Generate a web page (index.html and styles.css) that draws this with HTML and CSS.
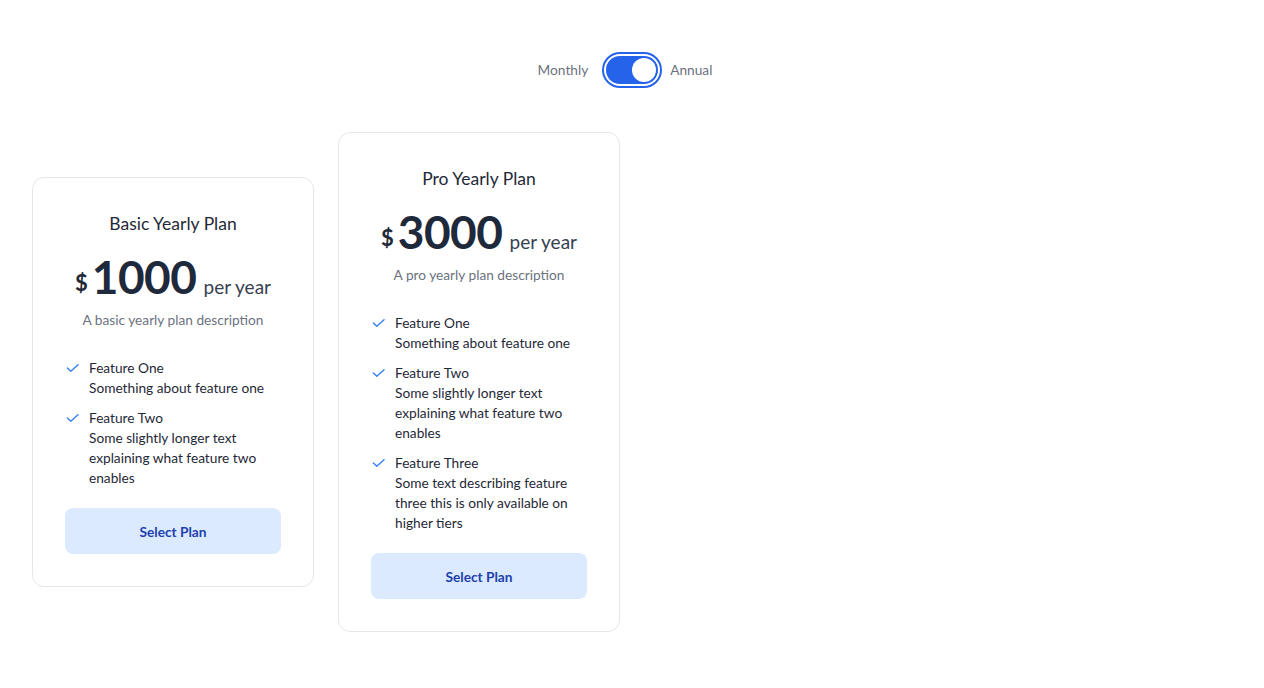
FILE: index.html
```html
<!DOCTYPE html>
<html lang="en">
<head>
<meta charset="utf-8">
<title>Pricing</title>
<link rel="stylesheet" href="styles.css">
</head>
<body>
<main class="page">
  <div class="billing">
    <span class="billing-label label-monthly">Monthly</span>
    <button class="toggle" type="button" aria-pressed="true"><span class="knob"></span></button>
    <span class="billing-label label-annual">Annual</span>
  </div>

  <div class="plans">
    <section class="card">
      <h2 class="card-title">Basic Yearly Plan</h2>
      <div class="price">
        <span class="currency">$</span><span class="amount">1000</span><span class="period">per year</span>
      </div>
      <p class="description">A basic yearly plan description</p>
      <ul class="features">
        <li class="feature">
          <svg class="check" viewBox="0 0 16 16" width="16" height="16"><path d="M2.4 8l3.4 3.2L13 4.8"/></svg>
          <div><div>Feature One</div><div>Something about feature one</div></div>
        </li>
        <li class="feature">
          <svg class="check" viewBox="0 0 16 16" width="16" height="16"><path d="M2.4 8l3.4 3.2L13 4.8"/></svg>
          <div><div>Feature Two</div><div>Some slightly longer text explaining what feature two enables</div></div>
        </li>
      </ul>
      <button class="select" type="button">Select Plan</button>
    </section>

    <section class="card">
      <h2 class="card-title">Pro Yearly Plan</h2>
      <div class="price">
        <span class="currency">$</span><span class="amount">3000</span><span class="period">per year</span>
      </div>
      <p class="description">A pro yearly plan description</p>
      <ul class="features">
        <li class="feature">
          <svg class="check" viewBox="0 0 16 16" width="16" height="16"><path d="M2.4 8l3.4 3.2L13 4.8"/></svg>
          <div><div>Feature One</div><div>Something about feature one</div></div>
        </li>
        <li class="feature">
          <svg class="check" viewBox="0 0 16 16" width="16" height="16"><path d="M2.4 8l3.4 3.2L13 4.8"/></svg>
          <div><div>Feature Two</div><div>Some slightly longer text explaining what feature two enables</div></div>
        </li>
        <li class="feature">
          <svg class="check" viewBox="0 0 16 16" width="16" height="16"><path d="M2.4 8l3.4 3.2L13 4.8"/></svg>
          <div><div>Feature Three</div><div>Some text describing feature three this is only available on higher tiers</div></div>
        </li>
      </ul>
      <button class="select" type="button">Select Plan</button>
    </section>
  </div>
</main>
</body>
</html>
```
FILE: styles.css
```css
* { box-sizing: border-box; }
html, body { margin: 0; padding: 0; background: #ffffff; }
body {
  font-family: Lato, "Noto Sans", sans-serif;
  color: #1f2937;
  -webkit-font-smoothing: antialiased;
}
.page {
  padding: 56px 32px 40px;
}

/* billing toggle */
.billing {
  display: flex;
  align-items: center;
  justify-content: center;
  height: 28px;
  margin-bottom: 48px;
  padding-right: 14px;
}
.billing-label {
  font-size: 13.7px;
  line-height: 20px;
  color: #6b7280;
}
.label-monthly { margin-right: 18px; }
.label-annual { margin-left: 12px; }
.toggle {
  display: flex;
  align-items: center;
  justify-content: flex-end;
  width: 52px;
  height: 28px;
  padding: 2px;
  border: 0;
  border-radius: 999px;
  background: #2563eb;
  box-shadow: 0 0 0 2px #ffffff, 0 0 0 4px #2563eb;
  cursor: pointer;
}
.knob {
  width: 24px;
  height: 24px;
  border-radius: 50%;
  background: #ffffff;
}

/* plans */
.plans {
  display: flex;
  align-items: center;
  gap: 24px;
}
.card {
  width: 282px;
  padding: 32px;
  border: 1px solid #e5e7eb;
  border-radius: 12px;
  background: #ffffff;
  display: flex;
  flex-direction: column;
}
.card-title {
  margin: 0;
  text-align: center;
  font-size: 17.5px;
  line-height: 28px;
  font-weight: 400;
  color: #1f2937;
}
.price {
  margin-top: 15px;
  height: 48px;
  line-height: 48px;
  text-align: center;
  white-space: nowrap;
}
.currency {
  font-size: 22px;
  font-weight: 700;
  color: #1f2937;
  margin-right: 4px;
  vertical-align: 3px;
}
.amount {
  font-size: 46px;
  font-weight: 700;
  letter-spacing: -0.5px;
  color: #1e293b;
}
.period {
  font-size: 19px;
  color: #374151;
  margin-left: 7px;
}
.description {
  margin: 9px 0 0;
  text-align: center;
  font-size: 13.7px;
  line-height: 20px;
  color: #6b7280;
}
.features {
  list-style: none;
  margin: 28px 0 0;
  padding: 0;
  display: flex;
  flex-direction: column;
  gap: 10px;
}
.feature {
  display: flex;
  gap: 8px;
  font-size: 13.7px;
  line-height: 20px;
  color: #1f2937;
}
.check {
  flex: none;
  margin-top: 2px;
  fill: none;
  stroke: #3b82f6;
  stroke-width: 1.5;
  stroke-linecap: round;
  stroke-linejoin: round;
}
.select {
  margin-top: 20px;
  height: 46px;
  width: 100%;
  border: 0;
  border-radius: 8px;
  background: #dbeafe;
  color: #1e40af;
  font-family: inherit;
  font-size: 13.7px;
  font-weight: 700;
  cursor: pointer;
}
```
